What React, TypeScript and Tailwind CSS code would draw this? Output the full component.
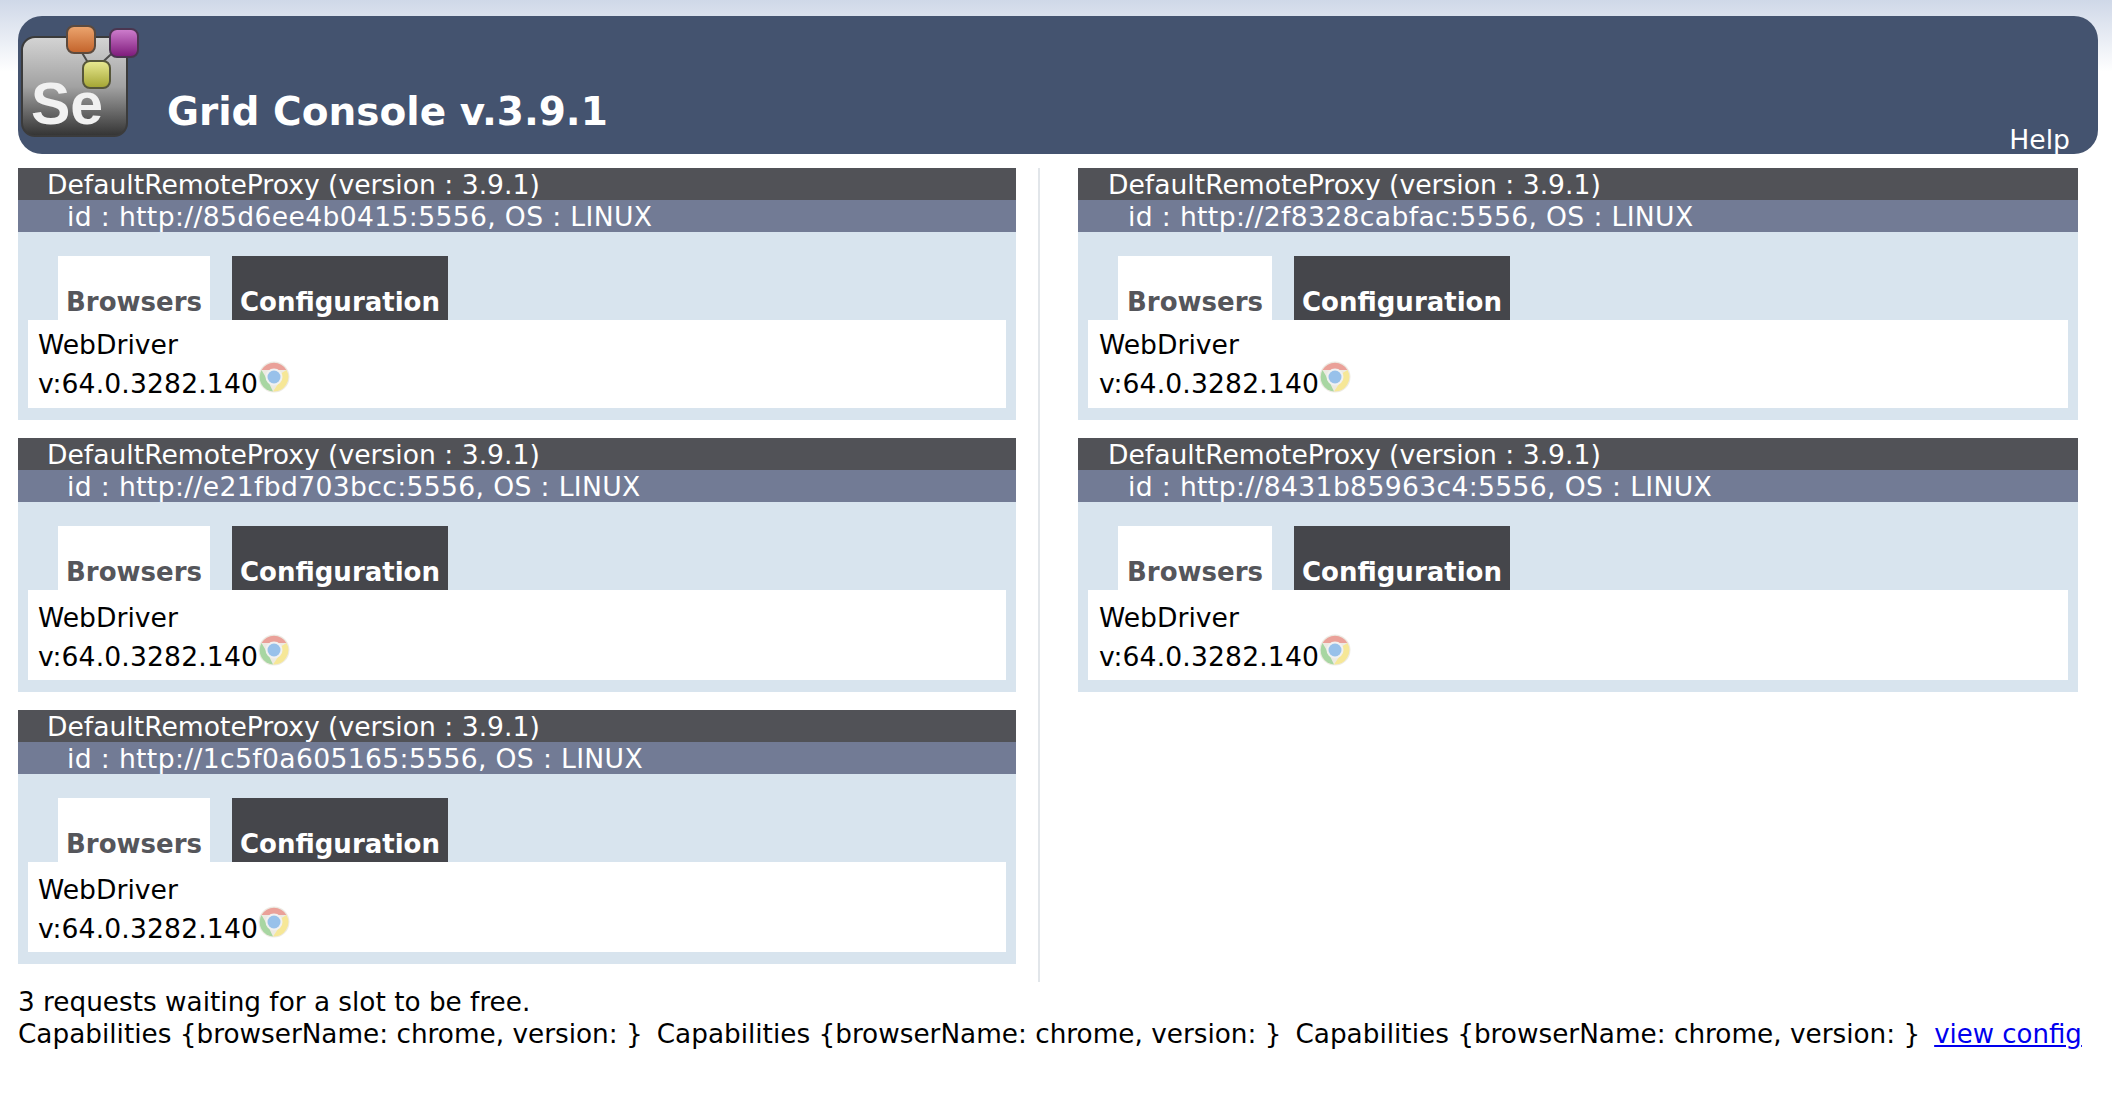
const font = "font-['DejaVu_Sans',Verdana,sans-serif]";

function ChromeIcon() {
  return (
    <svg viewBox="0 0 32 32" className="h-8 w-8 shrink-0 -translate-y-[7px] opacity-80 blur-[0.5px]">
      <circle cx="16" cy="16" r="15.5" fill="#e9e6dc" />
      <path d="M3.5 9 A14.5 14.5 0 0 1 28.5 9 L16 9 Z" fill="#e58a80" />
      <path d="M3.5 9 L10 20 L15 30.5 A14.5 14.5 0 0 1 3.5 9 Z" fill="#93cc8b" />
      <path d="M28.5 9 A14.5 14.5 0 0 1 15 30.5 L22 20 L22 13 Z" fill="#f5e27e" />
      <circle cx="16" cy="16" r="8.5" fill="#eeeeee" />
      <circle cx="16" cy="16" r="6.5" fill="#7fb2e6" />
    </svg>
  );
}

function SeLogo() {
  return (
    <svg viewBox="0 0 122 122" className="h-[122px] w-[122px] shrink-0">
      <defs>
        <linearGradient id="seBody" x1="0" y1="0" x2="0" y2="1">
          <stop offset="0" stopColor="#d4d4d4" />
          <stop offset="0.5" stopColor="#a2a2a2" />
          <stop offset="1" stopColor="#333333" />
        </linearGradient>
        <linearGradient id="seOrange" x1="0" y1="0" x2="0" y2="1">
          <stop offset="0" stopColor="#eda66f" />
          <stop offset="1" stopColor="#c2622a" />
        </linearGradient>
        <linearGradient id="sePurple" x1="0" y1="0" x2="0" y2="1">
          <stop offset="0" stopColor="#cf7fce" />
          <stop offset="1" stopColor="#7c1879" />
        </linearGradient>
        <linearGradient id="seYellow" x1="0" y1="0" x2="0" y2="1">
          <stop offset="0" stopColor="#e9ea93" />
          <stop offset="1" stopColor="#a3a432" />
        </linearGradient>
      </defs>
      <rect x="3" y="16" width="105" height="99" rx="13" fill="url(#seBody)" stroke="#3b3b3b" strokeWidth="2" />
      <path d="M62 30 L74 50 L102 24" fill="none" stroke="#4b4b4b" strokeWidth="2" />
      <rect x="48" y="5" width="28" height="27" rx="7" fill="url(#seOrange)" stroke="#5c4a3e" strokeWidth="2" />
      <rect x="91" y="8" width="28" height="28" rx="7" fill="url(#sePurple)" stroke="#4a3550" strokeWidth="2" />
      <rect x="64" y="40" width="27" height="27" rx="7" fill="url(#seYellow)" stroke="#56563a" strokeWidth="2" />
      <text x="12" y="103" fontFamily="'Liberation Sans', sans-serif" fontWeight="700" fontSize="59" fill="#f1f1f1">
        Se
      </text>
    </svg>
  );
}

function Proxy({ id, tall, right }: { id: string; tall?: boolean; right?: boolean }) {
  return (
    <div className="bg-[#d8e4ee]">
      <div className={`h-8 bg-[#515257] text-[26.6px] leading-[34px] text-white ${right ? "pl-[30px]" : "pl-[29px]"}`}>DefaultRemoteProxy (version : 3.9.1)</div>
      <div className={`h-8 bg-[#727b95] text-[26.6px] leading-[34px] tracking-[0.35px] text-white ${right ? "pl-[50px]" : "pl-[49px]"}`}>id : {id}, OS : LINUX</div>
      <div className="flex gap-[22px] pl-10 pt-6 text-[26px] font-bold leading-8">
        <div className={`flex h-16 items-end justify-center bg-white pb-[2px] text-[#55565b] ${right ? "w-[154px]" : "w-[152px]"}`}>Browsers</div>
        <div className="flex h-16 w-[216px] items-end justify-center bg-[#45464b] pb-[2px] text-white">Configuration</div>
      </div>
      <div className="px-[10px] pb-3">
        <div className={`bg-white text-[26.6px] leading-[39px] text-black ${right ? "pl-[11px]" : "pl-[10px]"} ${tall ? "h-[90px] pt-2" : "h-[88px] pt-[5px]"}`}>
          <div>WebDriver</div>
          <div className="flex items-center tracking-[0.15px]">
            v:64.0.3282.140
            <ChromeIcon />
          </div>
        </div>
      </div>
    </div>
  );
}

export default function App() {
  return (
    <div className={`min-h-[1100px] overflow-hidden bg-[linear-gradient(#cfd8e8,#ffffff_72px)] pt-4 ${font}`}>
      <div className="mx-[18px] flex h-[138px] w-[2080px] items-end rounded-3xl bg-[#44536f] text-white">
        <div className="mb-[11px] ml-[1px] mr-[26px]">
          <SeLogo />
        </div>
        <div className="mb-[18px] text-[39px] font-bold leading-[48px]">Grid Console v.3.9.1</div>
        <div className="ml-auto mr-7 text-[26.6px] leading-7">Help</div>
      </div>

      <div className="mt-[14px] flex pl-[18px]">
        <div className="flex w-[998px] flex-col gap-[18px]">
          <Proxy id="http://85d6ee4b0415:5556" />
          <Proxy id="http://e21fbd703bcc:5556" tall />
          <Proxy id="http://1c5f0a605165:5556" tall />
        </div>
        <div className="ml-[22px] h-[814px] border-l-2 border-[#e2e6ea] pl-[38px]">
          <div className="flex w-[1000px] flex-col gap-[18px]">
            <Proxy id="http://2f8328cabfac:5556" right />
            <Proxy id="http://8431b85963c4:5556" tall right />
          </div>
        </div>
      </div>

      <div className="mt-1 whitespace-nowrap pl-[18px] text-[26.3px] leading-8 text-black">
        <div>3 requests waiting for a slot to be free.</div>
        <div className="flex">
          <span className="mr-[14px]">{"Capabilities {browserName: chrome, version: }"}</span>
          <span className="mr-[14px]">{"Capabilities {browserName: chrome, version: }"}</span>
          <span className="mr-[14px]">{"Capabilities {browserName: chrome, version: }"}</span>
          <a href="#" className="text-[26px] text-[#0000ee] underline">view config</a>
        </div>
      </div>
    </div>
  );
}
